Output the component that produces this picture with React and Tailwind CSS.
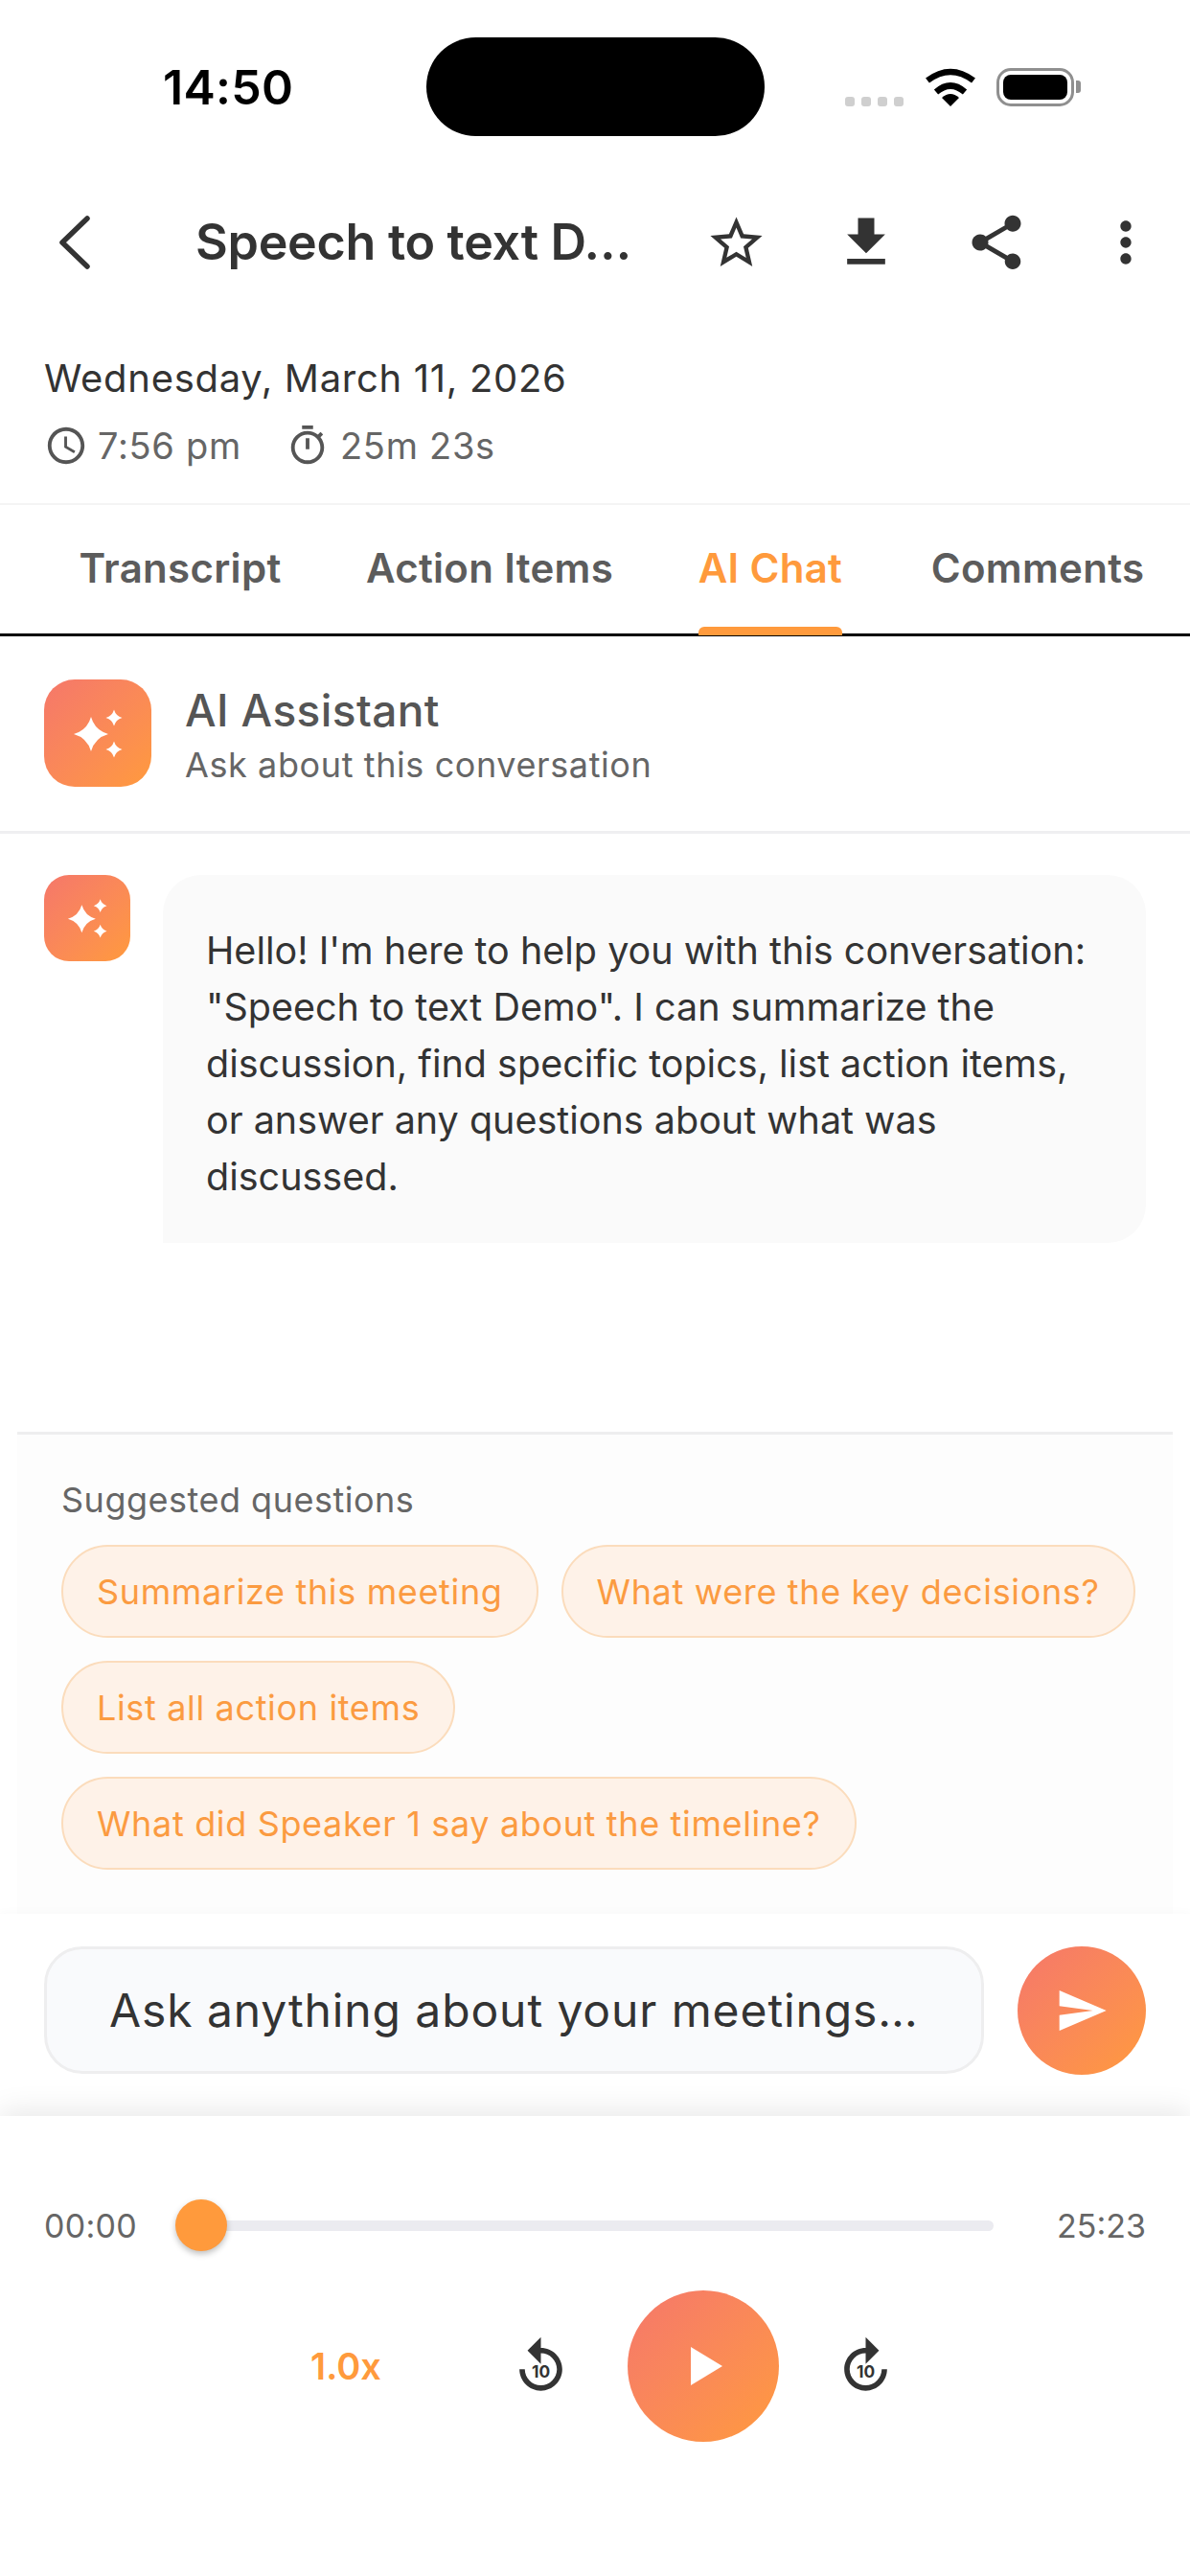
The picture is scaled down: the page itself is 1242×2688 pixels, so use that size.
import React from "react";

const star = (cx, cy, r) => {
  const k = r * 0.22;
  return `M${cx} ${cy - r}Q${cx + k} ${cy - k} ${cx + r} ${cy}Q${cx + k} ${cy + k} ${cx} ${cy + r}Q${cx - k} ${cy + k} ${cx - r} ${cy}Q${cx - k} ${cy - k} ${cx} ${cy - r}Z`;
};

function Sparkles({ className }) {
  return (
    <svg viewBox="0 0 112 112" className={className} fill="#fff">
      <path d={star(49, 57, 18)} />
      <path d={star(73, 40, 8.5)} />
      <path d={star(73, 73, 8.5)} />
    </svg>
  );
}

function Mat({ d, size, color = "#333333" }) {
  return (
    <svg viewBox="0 0 24 24" width={size} height={size} fill={color}>
      <path d={d} />
    </svg>
  );
}

const ICONS = {
  star: "M22 9.24l-7.19-.62L12 2 9.19 8.63 2 9.24l5.46 4.73L5.82 21 12 17.27 18.18 21l-1.63-7.03L22 9.24zM12 15.4l-3.76 2.27 1-4.28-3.32-2.88 4.38-.38L12 6.1l1.71 4.04 4.38.38-3.32 2.88 1 4.28L12 15.4z",
  download: "M19 9h-4V3H9v6H5l7 7 7-7zM5 18v2h14v-2H5z",
  share: "M18 16.08c-.76 0-1.44.3-1.96.77L8.91 12.7c.05-.23.09-.46.09-.7s-.04-.47-.09-.7l7.05-4.11c.54.5 1.25.81 2.04.81 1.66 0 3-1.34 3-3s-1.34-3-3-3-3 1.34-3 3c0 .24.04.47.09.7L8.04 9.81C7.5 9.31 6.79 9 6 9c-1.66 0-3 1.34-3 3s1.34 3 3 3c.79 0 1.5-.31 2.04-.81l7.12 4.16c-.05.21-.08.43-.08.65 0 1.61 1.31 2.92 2.92 2.92 1.61 0 2.92-1.31 2.92-2.92s-1.31-2.92-2.92-2.92z",
  more: "M12 8c1.1 0 2-.9 2-2s-.9-2-2-2-2 .9-2 2 .9 2 2 2zm0 2c-1.1 0-2 .9-2 2s.9 2 2 2 2-.9 2-2-.9-2-2-2zm0 6c-1.1 0-2 .9-2 2s.9 2 2 2 2-.9 2-2-.9-2-2-2z",
  clock: "M11.99 2C6.47 2 2 6.48 2 12s4.47 10 9.99 10C17.52 22 22 17.52 22 12S17.52 2 11.99 2zM12 20c-4.42 0-8-3.58-8-8s3.58-8 8-8 8 3.58 8 8-3.58 8-8 8zm.5-13H11v6l5.25 3.15.75-1.23-4.5-2.67z",
  timer: "M15 1H9v2h6V1zm-4 13h2V8h-2v6zm8.03-6.61l1.42-1.42c-.43-.51-.9-.99-1.41-1.41l-1.42 1.42C16.07 4.74 14.12 4 12 4c-4.97 0-9 4.03-9 9s4.02 9 9 9 9-4.03 9-9c0-2.12-.74-4.07-1.97-5.61zM12 20c-3.87 0-7-3.13-7-7s3.13-7 7-7 7 3.13 7 7-3.13 7-7 7z",
  send: "M2.01 21L23 12 2.01 3 2 10l15 2-15 2z",
  replay: "M12 5V1L7 6l5 5V7c3.3 0 6 2.7 6 6s-2.7 6-6 6-6-2.7-6-6H4c0 4.4 3.6 8 8 8s8-3.6 8-8-3.6-8-8-8z",
  forward: "M12 5V1l5 5-5 5V7c-3.3 0-6 2.7-6 6s2.7 6 6 6 6-2.7 6-6h2c0 4.4-3.6 8-8 8s-8-3.6-8-8 3.6-8 8-8z",
};

function Skip({ d }) {
  return (
    <svg viewBox="0 0 24 24" width="67" height="67" fill="#333333">
      <path d={d} />
      <text x="12" y="16.2" textAnchor="middle" fontSize="6.2" fontWeight="700" fontFamily="Inter, sans-serif">10</text>
    </svg>
  );
}

const TABS = [
  { label: "Transcript", w: "w-[300px]" },
  { label: "Action Items", w: "w-[346px]" },
  { label: "AI Chat", w: "w-[240px]", active: true },
  { label: "Comments", w: "w-[318px]" },
];

const CHIP = "h-[97px] px-[35px] flex items-center rounded-full bg-[#fef2e8] border-2 border-[#fbdcbc] text-[36px] text-[#fb9b41] tracking-[0.65px] whitespace-nowrap";

export default function App() {
  return (
    <div className="w-[1242px] h-[2688px] bg-white flex flex-col overflow-hidden font-[Inter,sans-serif]">
      {/* status bar */}
      <div className="pt-[39px] flex items-center pl-[170px] h-[142px] shrink-0">
        <div className="w-[275px] text-[50px] leading-[56px] font-semibold text-black tracking-[0.3px]">14:50</div>
        <div className="w-[353px] h-[103px] rounded-full bg-black shrink-0" />
        <div className="ml-[84px] mt-[30px] flex gap-[7px]">
          <div className="w-[10px] h-[10px] rounded-[3px] bg-[#cfcfcf]" />
          <div className="w-[10px] h-[10px] rounded-[3px] bg-[#cfcfcf]" />
          <div className="w-[10px] h-[10px] rounded-[3px] bg-[#cfcfcf]" />
          <div className="w-[10px] h-[10px] rounded-[3px] bg-[#cfcfcf]" />
        </div>
        <svg viewBox="0 0 54 40" width="54" height="40" className="ml-[22px]">
          <path d="M3 13Q27 -5 51 13" fill="none" stroke="#000" strokeWidth="6.5" />
          <path d="M12 25Q27 12 42 25" fill="none" stroke="#000" strokeWidth="6.5" />
          <path d="M27 40L18 31Q27 23 36 31Z" fill="#000" />
        </svg>
        <div className="ml-[21px] flex items-center gap-[2px]">
          <div className="w-[81px] h-[40px] rounded-[15px] border-[3px] border-[#8f8f8f] p-[4px]">
            <div className="w-full h-full rounded-[8px] bg-black" />
          </div>
          <div className="w-[5px] h-[13px] rounded-r-[3px] bg-[#8f8f8f]" />
        </div>
      </div>

      {/* header */}
      <div className="mt-[61px] h-[100px] flex items-center shrink-0">
        <div className="w-[204px] pl-[58px] shrink-0">
          <svg width="40" height="58" viewBox="0 0 40 58" fill="none" stroke="#333333" strokeWidth="5.5" strokeLinecap="round" strokeLinejoin="round">
            <path d="M33 4L7 29L33 54" />
          </svg>
        </div>
        <div className="w-[496px] shrink-0 text-[52px] leading-[70px] font-semibold text-[#333333] whitespace-nowrap tracking-[-0.3px]">Speech to text D…</div>
        <div className="w-[136px] flex justify-center shrink-0"><Mat d={ICONS.star} size={65} /></div>
        <div className="w-[136px] flex justify-center shrink-0"><Mat d={ICONS.download} size={68} /></div>
        <div className="w-[135px] flex justify-center shrink-0"><Mat d={ICONS.share} size={68} /></div>
        <div className="w-[135px] flex justify-center shrink-0"><Mat d={ICONS.more} size={68} /></div>
      </div>

      {/* meta */}
      <div className="px-[46px] pt-[67px] pb-[37px] border-b-2 border-[#f4f4f4] shrink-0">
        <div className="text-[40px] leading-[50px] text-[#333333] tracking-[0.7px]">Wednesday, March 11, 2026</div>
        <div className="mt-[22px] h-[46px] flex items-center text-[38px] text-[#666666] tracking-[0.7px]">
          <Mat d={ICONS.clock} size={46} color="#555555" />
          <span className="ml-[10px] w-[196px]">7:56 pm</span>
          <Mat d={ICONS.timer} size={46} color="#555555" />
          <span className="ml-[11px]">25m 23s</span>
        </div>
      </div>

      {/* tabs */}
      <div className="h-[137px] pl-[38px] flex border-b-[3px] border-black shrink-0">
        {TABS.map((t) => (
          <div key={t.label} className={`${t.w} flex justify-center`}>
            <div className={`relative h-full flex items-center pb-[4px] text-[42px] font-semibold whitespace-nowrap tracking-[0.3px] ${t.active ? "text-[#ff9a3c]" : "text-[#5c5c5c]"}`}>
              {t.label}
              {t.active && <div className="absolute left-0 right-0 bottom-[-2px] h-[9px] rounded-t-[6px] bg-[#ff9a3c]" />}
            </div>
          </div>
        ))}
      </div>

      {/* assistant header */}
      <div className="pt-[45px] pb-[46px] px-[46px] flex items-center border-b-[3px] border-[#efeff1] shrink-0">
        <div className="w-[112px] h-[112px] rounded-[32px] bg-linear-to-br from-[#f5776a] to-[#ff9a3c] shrink-0">
          <Sparkles className="w-full h-full" />
        </div>
        <div className="ml-[35px]">
          <div className="text-[46px] leading-[60px] font-medium text-[#555555] tracking-[0.4px]">AI Assistant</div>
          <div className="mt-[5px] text-[36px] leading-[44px] text-[#666666] tracking-[0.6px]">Ask about this conversation</div>
        </div>
      </div>

      {/* chat */}
      <div className="flex-1 min-h-0 pt-[43px] px-[46px] flex gap-[34px] items-start">
        <div className="w-[90px] h-[90px] rounded-[26px] bg-linear-to-br from-[#f5776a] to-[#ff9a3c] shrink-0">
          <Sparkles className="w-full h-full" />
        </div>
        <div className="w-[1026px] bg-[#fafafa] rounded-[40px] rounded-bl-none pt-[50px] pb-[39px] pl-[45px] pr-[38px] text-[39.5px] leading-[59px] text-[#333333] font-normal">
          <div className="whitespace-nowrap">Hello! I'm here to help you with this conversation:</div>
          <div className="whitespace-nowrap">"Speech to text Demo". I can summarize the</div>
          <div className="whitespace-nowrap">discussion, find specific topics, list action items,</div>
          <div className="whitespace-nowrap">or answer any questions about what was</div>
          <div className="whitespace-nowrap">discussed.</div>
        </div>
      </div>

      {/* suggested */}
      <div className="mx-[18px] pl-[46px] pr-[20px] pt-[46px] pb-[46px] border-t-[3px] border-[#eeeeef] bg-[#fdfdfd] shrink-0">
        <div className="text-[36px] leading-[44px] text-[#666666] mb-[25px] tracking-[0.5px]">Suggested questions</div>
        <div className="flex flex-wrap gap-[24px]">
          <div className={CHIP}>Summarize this meeting</div>
          <div className={CHIP}>What were the key decisions?</div>
          <div className={CHIP}>List all action items</div>
          <div className={CHIP}>What did Speaker 1 say about the timeline?</div>
        </div>
      </div>

      {/* input */}
      <div className="relative z-10 h-[211px] shrink-0 bg-white pt-[34px] px-[46px] flex gap-[35px] items-start shadow-[0_-3px_8px_rgba(0,0,0,0.02)]">
        <div className="w-[981px] h-[133px] rounded-[40px] bg-[#f9fafc] border-[3px] border-[#eeeeef] flex items-center pl-[65px] text-[48px] text-[#333333] tracking-[0.9px] whitespace-nowrap">
          Ask anything about your meetings…
        </div>
        <div className="w-[134px] h-[134px] rounded-full bg-linear-to-br from-[#f5776a] to-[#ff9a3c] flex items-center justify-center shrink-0">
          <Mat d={ICONS.send} size={56} color="#ffffff" />
        </div>
      </div>

      {/* player */}
      <div className="relative z-20 flex-none h-[480px] bg-white shadow-[0_-6px_28px_rgba(0,0,0,0.09)] pt-[87px]">
        <div className="px-[46px] flex items-center h-[54px]">
          <div className="w-[137px] shrink-0 text-[34px] tracking-[0.3px] text-[#666666]">00:00</div>
          <div className="relative w-[854px] h-[54px] shrink-0 flex items-center pl-[47px]">
            <div className="w-full h-[11px] rounded-full bg-[#ebebf0]" />
            <div className="absolute left-0 top-0 w-[54px] h-[54px] rounded-full bg-[#ff9a3c] shadow-[0_3px_6px_rgba(0,0,0,0.25)]" />
          </div>
          <div className="flex-1 text-right text-[34px] text-[#666666]">25:23</div>
        </div>
        <div className="mt-[41px] flex items-center h-[158px]">
          <div className="ml-[261px] w-[200px] mr-[70px] text-center text-[38px] font-semibold text-[#ff9a3c]">1.0x</div>
          <div className="flex items-center gap-[57px]">
            <Skip d={ICONS.replay} />
            <div className="w-[158px] h-[158px] rounded-full bg-linear-to-br from-[#f5776a] to-[#ff9a3c] flex items-center justify-center">
              <svg width="34" height="40" viewBox="0 0 34 40" className="ml-[8px]"><path d="M0 0L33 20L0 40Z" fill="#fff" /></svg>
            </div>
            <Skip d={ICONS.forward} />
          </div>
        </div>
      </div>
    </div>
  );
}
